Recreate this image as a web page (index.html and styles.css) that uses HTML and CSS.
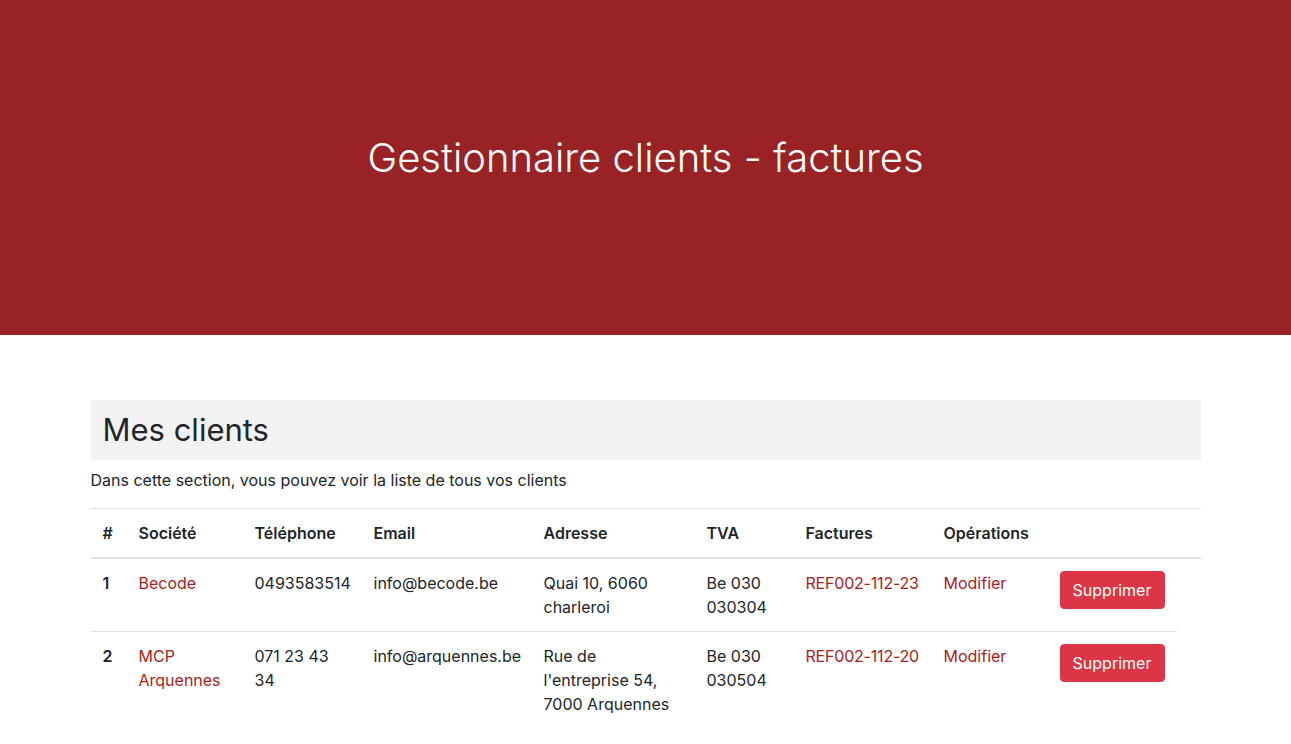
FILE: index.html
```html
<!DOCTYPE html>
<html lang="fr">
<head>
<meta charset="utf-8">
<title>Gestionnaire clients - factures</title>
<link rel="stylesheet" href="styles.css">
</head>
<body>
<header class="hero">
  <h1 class="hero-title">Gestionnaire clients - factures</h1>
</header>
<main class="container">
  <h2 class="section-title">Mes clients</h2>
  <p class="section-lead">Dans cette section, vous pouvez voir la liste de tous vos clients</p>
  <table class="table">
    <colgroup>
      <col class="c-num"><col class="c-soc"><col class="c-tel"><col class="c-mail"><col class="c-addr"><col class="c-tva"><col class="c-fact"><col class="c-mod"><col class="c-del"><col class="c-extra">
    </colgroup>
    <thead>
      <tr>
        <th>#</th><th>Société</th><th>Téléphone</th><th>Email</th><th>Adresse</th><th>TVA</th><th>Factures</th><th>Opérations</th><th></th><th></th>
      </tr>
    </thead>
    <tbody>
      <tr>
        <th>1</th>
        <td><a href="#">Becode</a></td>
        <td>0493583514</td>
        <td>info@becode.be</td>
        <td>Quai 10, 6060 charleroi</td>
        <td>Be 030 030304</td>
        <td><a class="ref" href="#">REF002-112-23</a></td>
        <td><a href="#">Modifier</a></td>
        <td><button class="btn-danger" type="button">Supprimer</button></td>
      </tr>
      <tr>
        <th>2</th>
        <td><a href="#">MCP Arquennes</a></td>
        <td>071 23 43 34</td>
        <td>info@arquennes.be</td>
        <td>Rue de l'entreprise 54, 7000 Arquennes</td>
        <td>Be 030 030504</td>
        <td><a class="ref" href="#">REF002-112-20</a></td>
        <td><a href="#">Modifier</a></td>
        <td><button class="btn-danger" type="button">Supprimer</button></td>
      </tr>
    </tbody>
  </table>
</main>
</body>
</html>
```
FILE: styles.css
```css
* { box-sizing: border-box; }
html, body { margin: 0; padding: 0; }
body {
  font-family: "Inter", "Liberation Sans", sans-serif;
  font-size: 16px;
  line-height: 24px;
  color: #212529;
  background: #fff;
}
.hero {
  background: #982224;
  height: 335px;
  display: flex;
  align-items: center;
  justify-content: center;
  padding-bottom: 19px;
}
.hero-title {
  margin: 0;
  color: #fff;
  font-size: 40px;
  font-weight: 300;
  line-height: 48px;
}
.container {
  width: 1110px;
  margin: 65px auto 0;
}
.section-title {
  margin: 0 0 8px;
  background: #f2f2f2;
  padding: 11px 12px;
  font-size: 31px;
  font-weight: 400;
  line-height: 38px;
}
.section-lead {
  margin: 0 0 16px;
}
.table {
  width: 100%;
  border-collapse: collapse;
  table-layout: fixed;
}
.c-num { width: 36px; }
.c-soc { width: 116px; }
.c-tel { width: 119px; }
.c-mail { width: 170px; }
.c-addr { width: 163px; }
.c-tva { width: 99px; }
.c-fact { width: 138px; }
.c-mod { width: 116px; }
.c-del { width: 129px; }
.c-extra { width: 24px; }
.table th, .table td {
  padding: 12px;
  text-align: left;
  vertical-align: top;
  border-top: 1px solid #dee2e6;
  font-weight: 400;
}
.table th { font-weight: 600; }
.table thead th { border-bottom: 2px solid #dee2e6; }
.table a { color: #a41e22; text-decoration: none; }
.table a.ref { white-space: nowrap; letter-spacing: -0.2px; }
.btn-danger {
  font-family: inherit;
  font-size: 16px;
  line-height: 24px;
  color: #fff;
  background: #dc3545;
  border: 1px solid #dc3545;
  border-radius: 4px;
  padding: 6px 12px;
  width: 105px;
  cursor: pointer;
}
```
